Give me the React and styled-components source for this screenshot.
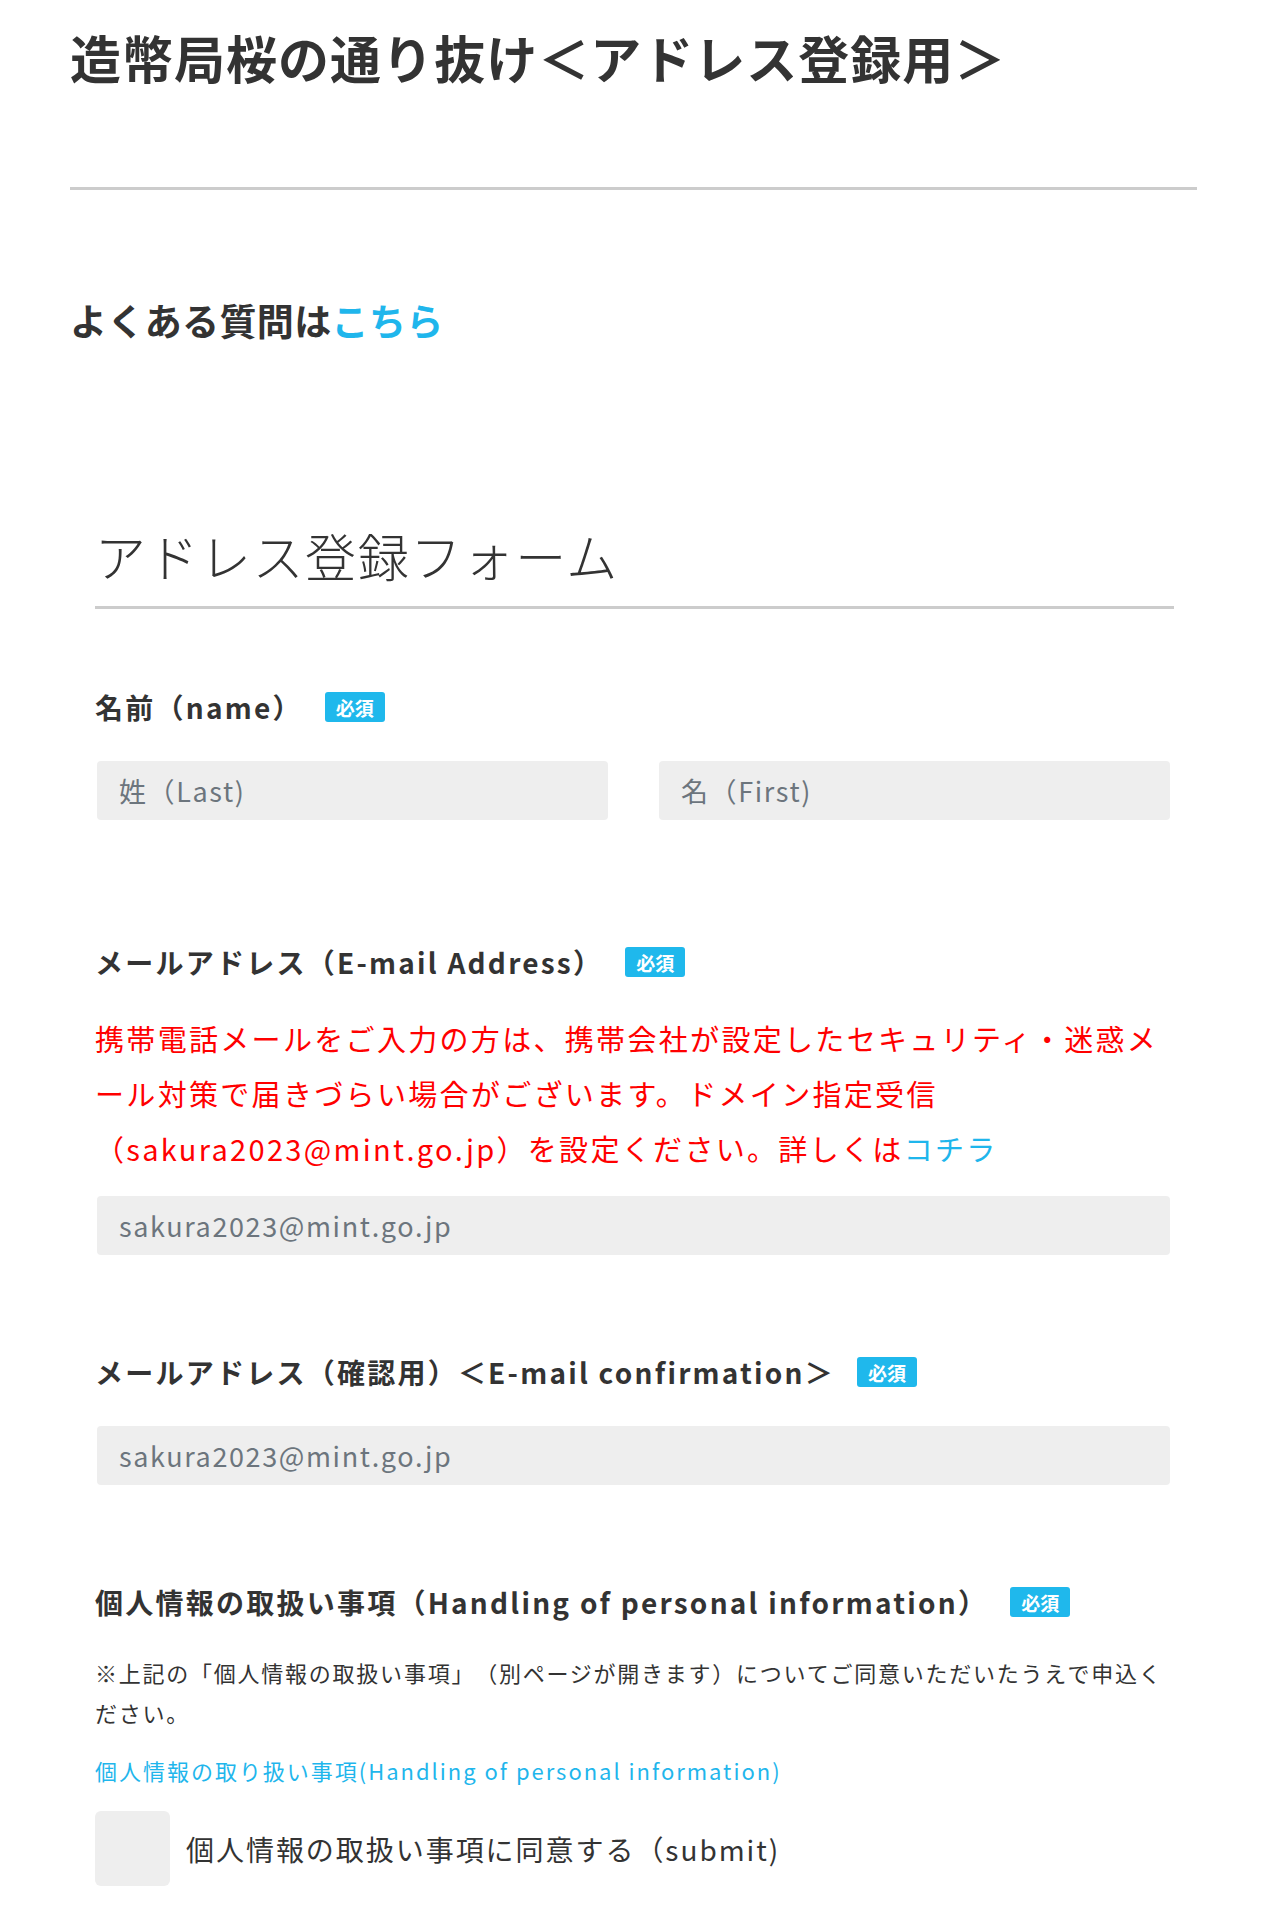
import React from 'react'
import styled, { createGlobalStyle } from 'styled-components'

const GlobalStyle = createGlobalStyle`
  body {
    margin: 0;
    background: #fff;
    color: #333;
    font-family: "Noto Sans CJK JP", "Noto Sans", sans-serif;
    text-spacing-trim: space-all;
  }
`

const Page = styled.div`
  width: 1127px;
  padding: 23px 0 40px 70px;
`

const Title = styled.h1`
  margin: 0;
  font-size: 51px;
  line-height: 68px;
  font-weight: 700;
  color: #333;
  letter-spacing: 0.02em;
`

const Rule = styled.hr`
  margin: ${p => p.$top || 0}px 0 0;
  border: 0;
  height: 3px;
  background: #ccc;
`

const Faq = styled.p`
  margin: 106px 0 0;
  font-size: 37px;
  line-height: 48px;
  font-weight: 700;
  color: #333;
  letter-spacing: 0.01em;
`

const Link = styled.a`
  color: #1fb6ec;
  text-decoration: none;
`

const Form = styled.form`
  padding: 0 23px 0 25px;
`

const FormTitle = styled.h2`
  margin: 177px 0 0;
  font-size: 51px;
  line-height: 68px;
  font-weight: 300;
  color: #333;
  letter-spacing: 0.03em;
`

const Field = styled.div`
  margin-top: ${p => p.$top}px;
`

const LabelRow = styled.div`
  display: flex;
  align-items: center;
  gap: 22px;
  height: 40px;
`

const Label = styled.label`
  font-size: 28px;
  font-weight: 700;
  color: #333;
  letter-spacing: 0.08em;
`

const Badge = styled.span`
  display: inline-flex;
  align-items: center;
  justify-content: center;
  width: 60px;
  height: 30px;
  border-radius: 3px;
  background: #1fb8ec;
  color: #fff;
  font-size: 19px;
  font-weight: 700;
`

const InputRow = styled.div`
  display: grid;
  grid-template-columns: ${p => (p.$split ? '1fr 1fr' : '1fr')};
  column-gap: 51px;
  margin-top: ${p => p.$top || 34}px;
  padding: 0 4px 0 2px;
`

const Input = styled.input`
  box-sizing: border-box;
  height: 59px;
  width: 100%;
  border: 0;
  border-radius: 4px;
  background: #eee;
  padding: 0 22px;
  font-family: inherit;
  font-size: 27px;
  letter-spacing: 0.06em;
  color: #333;
  &::placeholder {
    color: #6c757d;
  }
`

const Warning = styled.p`
  margin: 29px 0 0;
  font-size: 29px;
  line-height: 55px;
  color: #ff0000;
  letter-spacing: 0.08em;
`

const Note = styled.p`
  margin: 30px 0 0;
  font-size: 22px;
  line-height: 40px;
  color: #333;
  letter-spacing: 0.08em;
`

const SmallLink = styled(Link)`
  display: block;
  margin-top: 20px;
  font-size: 22px;
  line-height: 36px;
  letter-spacing: 0.09em;
`

const Agree = styled.label`
  display: flex;
  align-items: center;
  gap: 16px;
  margin-top: 23px;
  font-size: 28px;
  color: #333;
  letter-spacing: 0.07em;
`

const Box = styled.span`
  width: 75px;
  height: 75px;
  border-radius: 6px;
  background: #eee;
  flex-shrink: 0;
`

export default function App () {
  return (
    <Page>
      <GlobalStyle />
      <Title>造幣局桜の通り抜け＜アドレス登録用＞</Title>
      <Rule $top={96} />
      <Faq>よくある質問は<Link href='#'>こちら</Link></Faq>
      <Form>
        <FormTitle>アドレス登録フォーム</FormTitle>
        <Rule $top={17} />

        <Field $top={78}>
          <LabelRow>
            <Label>名前（name）</Label>
            <Badge>必須</Badge>
          </LabelRow>
          <InputRow $split>
            <Input placeholder='姓（Last)' />
            <Input placeholder='名（First)' />
          </InputRow>
        </Field>

        <Field $top={122}>
          <LabelRow>
            <Label>メールアドレス（E-mail Address）</Label>
            <Badge>必須</Badge>
          </LabelRow>
          <Warning>
            携帯電話メールをご入力の方は、携帯会社が設定したセキュリティ・迷惑メール対策で届きづらい場合がございます。ドメイン指定受信（sakura2023@mint.go.jp）を設定ください。詳しくは<Link href='#'>コチラ</Link>
          </Warning>
          <InputRow $top={20}>
            <Input placeholder='sakura2023@mint.go.jp' />
          </InputRow>
        </Field>

        <Field $top={97}>
          <LabelRow>
            <Label>メールアドレス（確認用）＜E-mail confirmation＞</Label>
            <Badge>必須</Badge>
          </LabelRow>
          <InputRow>
            <Input placeholder='sakura2023@mint.go.jp' />
          </InputRow>
        </Field>

        <Field $top={97}>
          <LabelRow>
            <Label>個人情報の取扱い事項（Handling of personal information）</Label>
            <Badge>必須</Badge>
          </LabelRow>
          <Note>
            ※上記の「個人情報の取扱い事項」（別ページが開きます）についてご同意いただいたうえで申込ください。
          </Note>
          <SmallLink href='#'>個人情報の取り扱い事項(Handling of personal information)</SmallLink>
          <Agree>
            <Box />
            個人情報の取扱い事項に同意する（submit)
          </Agree>
        </Field>
      </Form>
    </Page>
  )
}
